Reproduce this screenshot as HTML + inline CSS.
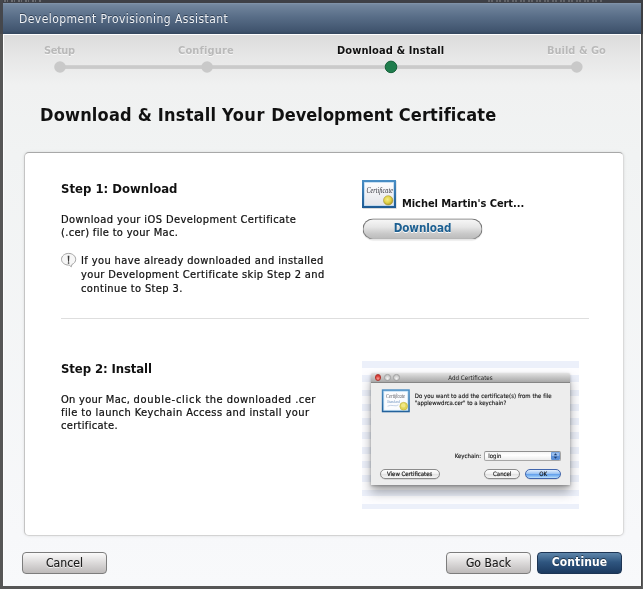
<!DOCTYPE html>
<html lang="en">
<head>
<meta charset="utf-8">
<title>Development Provisioning Assistant</title>
<style>
html,body{margin:0;padding:0;}
body{will-change:transform;width:643px;height:589px;overflow:hidden;background:#565656;position:relative;
  font-family:"DejaVu Sans Condensed","Liberation Sans","DejaVu Sans",sans-serif;color:#111;}
*{box-sizing:border-box;}
.abs{position:absolute;}
#dialog{position:absolute;left:3px;top:3px;width:638px;height:583px;background:#f4f5f6;overflow:hidden;}
#titlebar{position:absolute;left:0;top:0;width:638px;height:31px;
  background:linear-gradient(#8798ad 0px,#778ba2 1px,#6f839b 3px,#586d87 14px,#40546e 28px,#34475e 31px);}
#titlebar span{position:absolute;left:16px;top:9px;font-size:12px;line-height:15px;color:#eef1f5;letter-spacing:.45px;
  text-shadow:0 -1px 0 rgba(20,30,45,.6);white-space:nowrap;}
#body{position:absolute;left:0;top:31px;width:638px;height:552px;border-left:1px solid #fdfdfd;border-right:1px solid #fdfdfd;border-top:1px solid #fff;
  background:linear-gradient(#dcdcdc 0px,#e6e6e6 20px,#f0f1f1 50px,#f1f3f3 120px,#f7f8fa 500px,#f8f9fb 552px);}
.step{position:absolute;top:44px;font-size:11px;line-height:14px;font-weight:bold;color:#b9b9b9;white-space:nowrap;text-shadow:0 1px 0 rgba(255,255,255,.7);}
h1{position:absolute;margin:0;left:40px;top:104px;font-size:18px;line-height:22px;font-weight:bold;color:#111;white-space:nowrap;letter-spacing:.17px;}
#panel{position:absolute;left:24px;top:152px;width:600px;height:384px;background:#fff;border-radius:5px;
  border:1px solid #c4c4c4;border-top-color:#a8a8a8;border-right-color:#dadada;border-bottom-color:#d3d3d3;box-shadow:0 0 3px rgba(0,0,0,.11);}
.h2{position:absolute;left:61px;font-size:13px;line-height:16px;font-weight:bold;white-space:nowrap;letter-spacing:0;}
.p{position:absolute;font-size:11px;white-space:nowrap;letter-spacing:.32px;color:#0a0a0a;-webkit-text-stroke:.22px #1a1a1a;}
.btn{position:absolute;top:552px;height:22px;border:1px solid #7d7d7d;border-radius:4px;
  background:linear-gradient(#fbfbfb,#dedcdc 45%,#bdbaba);font-size:12px;line-height:20px;text-align:center;color:#1a1a1a;
  text-shadow:0 1px 0 rgba(255,255,255,.8);letter-spacing:.08px;-webkit-text-stroke:.15px #1a1a1a;}

#shot{position:absolute;left:362px;top:361px;width:217px;height:148px;overflow:hidden;
  background:repeating-linear-gradient(#ecf0fa 0px,#ecf0fa 6.800px,#fdfdff 6.800px,#fdfdff 14.300px);}
#win{position:absolute;left:9px;top:12px;width:199px;height:112px;background:#ededed;border-radius:2px 2px 0 0;
  box-shadow:0 7px 11px rgba(0,0,0,.34),0 1px 3px rgba(0,0,0,.28);}
#wtitle{position:absolute;left:0;top:0;width:199px;height:10px;background:linear-gradient(#e2e2e2,#c4c4c4 50%,#a8a8a8);border-bottom:1px solid #868686;border-radius:2px 2px 0 0;}
#wtitle i{position:absolute;top:1.200px;width:6.600px;height:6.600px;border-radius:50%;background:radial-gradient(circle at 50% 70%,#f0f0f0,#c8c8c8 70%);border:.6px solid #a2a2a2;}
#wtitle span{position:absolute;left:0;width:199px;top:1.300px;text-align:center;font-size:6.200px;line-height:8px;color:#1c1c1c;}
.wt{position:absolute;font-size:6px;line-height:7.100px;color:#0c0c0c;white-space:nowrap;-webkit-text-stroke:.12px #222;}
.wb{position:absolute;top:95.700px;height:10.600px;border:1px solid #8c8c8c;border-radius:5.500px;background:linear-gradient(#fff,#f1f1f1 48%,#e2e2e2 52%,#f7f7f7);font-size:6px;line-height:8.600px;text-align:center;color:#0c0c0c;white-space:nowrap;box-shadow:0 .5px .5px rgba(0,0,0,.2);-webkit-text-stroke:.15px #222;}
</style>
</head>
<body>
<div class="abs" style="left:0;top:0;width:643px;height:3px;background:#3e4046"></div>
<div class="abs" style="left:0;top:0;width:3px;height:34px;background:#45474c"></div>
<div class="abs" style="left:641px;top:0;width:2px;height:34px;background:#3c3e43"></div>
<div class="abs" style="left:641px;top:34px;width:1px;height:552px;background:#474747"></div>
<div class="abs" style="left:642px;top:34px;width:1px;height:555px;background:#5e5e5e"></div>
<div class="abs" style="left:4px;top:0;width:38px;height:2px;opacity:.28;background:repeating-linear-gradient(90deg,#ddd 0,#ddd 2px,transparent 2px,transparent 3px,#ddd 3px,#ddd 4px,transparent 4px,transparent 7px)"></div>
<div class="abs" style="left:488px;top:0;width:115px;height:2px;opacity:.25;background:repeating-linear-gradient(90deg,#ccc 0,#ccc 2px,transparent 2px,transparent 3px,#ccc 3px,#ccc 5px,transparent 5px,transparent 8px)"></div>
<div id="dialog">
  <div id="titlebar"><span>Development Provisioning Assistant</span></div>
  <div id="body"></div>
</div>

<!-- progress steps (page coordinates) -->
<svg class="abs" style="left:40px;top:55px" width="560" height="24" viewBox="0 0 560 24">
  <rect x="20" y="10.200" width="517" height="3.700" fill="#cacaca"/>
  <circle cx="20" cy="12" r="5.800" fill="#c9c9c9"/>
  <circle cx="167.100" cy="12" r="5.800" fill="#c9c9c9"/>
  <circle cx="536.800" cy="12" r="5.800" fill="#c9c9c9"/>
  <circle cx="351" cy="11.900" r="5.800" fill="#1f7d4d" stroke="#15613a" stroke-width="1"/>
</svg>
<div class="step" style="left:44px;letter-spacing:-.4px">Setup</div>
<div class="step" style="left:178px;letter-spacing:.15px">Configure</div>
<div class="step" style="left:337px;color:#111;text-shadow:0 1px 0 rgba(255,255,255,.8);letter-spacing:.1px">Download &amp; Install</div>
<div class="step" style="left:547px">Build &amp; Go</div>

<h1><span style="letter-spacing:.2px">Download &amp; Install </span><span style="letter-spacing:.55px">Your </span><span style="letter-spacing:.05px">Development </span><span style="letter-spacing:.14px">Certificate</span></h1>

<div id="panel"></div>

<!-- Step 1 -->
<div class="h2" style="top:181px">Step 1: Download</div>
<div class="p" style="left:61px;top:213px;line-height:13px;letter-spacing:.4px">Download your iOS Development Certificate<br><span style="letter-spacing:.32px">(.cer) file to your Mac.</span></div>
<svg class="abs" style="left:60px;top:252px" width="18" height="17" viewBox="0 0 18 17">
  <path d="M8.6 1.4c3.9 0 7.1 2.6 7.100 5.900c0 2.300-1.500 4.300-3.800 5.200l-.6 2.300-2.100-1.700c-.2 0-.4 0-.6 0c-3.900 0-7.100-2.600-7.100-5.800c0-3.300 3.200-5.900 7.100-5.900z" fill="#f6f6f6" stroke="#9a9a9a" stroke-width=".9"/>
  <path d="M7.700 3.700h1.700l-.35 6.000h-1.000z" fill="#3a3a3a"/>
  <rect x="7.800" y="10.300" width="1.500" height="1.500" rx=".5" fill="#3a3a3a"/>
</svg>
<div class="p" style="left:81px;top:254px;line-height:14px;letter-spacing:.39px">If you have already downloaded and installed<br>your Development Certificate skip Step 2 and<br>continue to Step 3.</div>

<div class="abs" style="left:61px;top:318px;width:528px;height:1px;background:#dedede"></div>

<!-- Step 2 -->
<div class="h2" style="top:361px;letter-spacing:-.1px">Step 2: Install</div>
<div class="p" style="left:61px;top:393px;line-height:13px"><span style="letter-spacing:.28px">On your Mac, </span><span style="letter-spacing:.72px">double-click </span><span style="letter-spacing:.46px">the downloaded .cer</span><br><span style="letter-spacing:.41px">file to launch Keychain Access and install your</span><br>certificate.</div>


<!-- Step 1 right column -->
<svg class="abs" style="left:361px;top:179px" width="37" height="31" viewBox="0 0 37 31">
  <defs>
    <linearGradient id="cf" x1="0" y1="0" x2="0" y2="1"><stop offset="0" stop-color="#4a8fc6"/><stop offset="1" stop-color="#1d5a93"/></linearGradient>
    <linearGradient id="ci" x1="0" y1="0" x2="0" y2="1"><stop offset="0" stop-color="#fdfdfe"/><stop offset="1" stop-color="#e4e5ea"/></linearGradient>
    <radialGradient id="gs" cx=".42" cy=".4" r=".62"><stop offset="0" stop-color="#f4ec86"/><stop offset=".55" stop-color="#e3d44a"/><stop offset="1" stop-color="#a99527"/></radialGradient>
  </defs>
  <rect x="1.600" y="2" width="34" height="28" fill="rgba(0,0,0,.15)"/>
  <rect x="1" y="1" width="34" height="28" fill="url(#cf)"/>
  <rect x="3" y="3" width="30" height="24" fill="#b4d4ee"/>
  <rect x="3.700" y="3.700" width="28.600" height="22.600" fill="url(#ci)"/>
  <text x="5.400" y="13.800" font-family="'Liberation Serif','DejaVu Serif',serif" font-style="italic" font-size="7.500" fill="#2e2e38" textLength="26.500" lengthAdjust="spacingAndGlyphs">Certificate</text>
  <circle cx="27.200" cy="21.400" r="4.700" fill="url(#gs)" stroke="#a08c24" stroke-width=".5"/>
</svg>
<div class="abs" style="left:402px;top:197px;font-size:11px;line-height:14px;font-weight:bold;white-space:nowrap;letter-spacing:-.06px">Michel Martin's Cert...</div>
<div class="abs" id="dl" style="left:362px;top:218px;width:120px;height:21px;transform:translate(.5px,.4px);border:1px solid #747474;border-bottom-color:#8a8a8a;border-radius:11px;background:linear-gradient(#f7f7f7,#e6e6e6 40%,#c9c9c9 75%,#bcbcbc);box-shadow:0 1px 1px rgba(0,0,0,.12);font-size:11.600px;line-height:19.400px;font-weight:bold;color:#1c5f91;text-align:center;letter-spacing:-.05px;text-shadow:0 1px 0 rgba(255,255,255,.9)">Download</div>

<!-- Step 2 mini screenshot -->
<div id="shot">
  <div id="win">
    <div id="wtitle"><i style="left:3.900px;background:radial-gradient(circle at 50% 72%,#f7a29a,#e0463f 55%,#c12b25);border-color:#b0362f"></i><i style="left:13.100px"></i><i style="left:22.300px"></i><span>Add Certificates</span></div>
    <svg class="abs" style="left:10px;top:16px" width="30" height="25" viewBox="0 0 30 25">
      <defs><linearGradient id="mf" x1="0" y1="0" x2="0" y2="1"><stop offset="0" stop-color="#4b8ec4"/><stop offset="1" stop-color="#22609a"/></linearGradient></defs>
      <rect x=".800" y=".300" width="28" height="23" fill="url(#mf)"/>
      <rect x="2.300" y="1.800" width="25" height="20" fill="#bcdcf3"/>
      <rect x="3.200" y="2.700" width="23.200" height="18.200" fill="#fbfcfe"/>
      <text x="5" y="8.600" font-family="'Liberation Serif',serif" font-style="italic" font-size="5.500" fill="#55555c" textLength="19" lengthAdjust="spacingAndGlyphs">Certificate</text>
      <text x="6" y="13.800" font-family="'Liberation Serif',serif" font-style="italic" font-size="4.600" fill="#6a8fbd" textLength="13" lengthAdjust="spacingAndGlyphs">Standard</text>
      <path d="M6.500 17.200q3-1.400 6-.6t5-.8" stroke="#8fa9cc" stroke-width=".5" fill="none"/>
      <circle cx="22.700" cy="17.200" r="3.900" fill="#e2d658" stroke="#b9aa3c" stroke-width=".5"/>
      <circle cx="22.300" cy="16.400" r="2.200" fill="#f3eb8e" opacity=".85"/>
    </svg>
    <div class="wt" style="left:43.700px;top:19.200px;line-height:7.100px"><span style="letter-spacing:.05px">Do you want to add the certificate(s) from the file</span><br>"applewwdrca.cer" to a keychain?</div>
    <div class="wt" style="left:50px;width:60px;text-align:right;top:78.800px;line-height:7.100px">Keychain:</div>
    <div class="abs" style="left:113px;top:78px;width:77px;height:10px;border:1px solid #a6a6a6;border-top-color:#8f8f8f;border-radius:2px;background:linear-gradient(#f4f4f4,#fff 40%,#ececec);"><span class="wt" style="left:3.200px;top:-.200px;line-height:7.100px">login</span><svg style="position:absolute;right:0;top:0" width="9" height="8" viewBox="0 0 9 8"><rect width="9" height="8" rx="1.200" fill="#5b8fd6"/><rect x=".6" y=".5" width="7.800" height="3.500" rx="1" fill="#a9c9f2" opacity=".8"/><path d="M4.500 1.200l1.700 2h-3.400zM4.500 6.800l1.700-2h-3.400z" fill="#1d3c6e"/></svg></div>
    <div class="wb" style="left:8.600px;width:60.200px">View Certificates</div>
    <div class="wb" style="left:113.400px;width:35.700px">Cancel</div>
    <div class="wb" style="left:154.100px;width:36px;border-color:#4166ad;background:linear-gradient(#e2eefc,#9cc4f3 45%,#5f9deb 52%,#8cc0f5 80%,#c2e3fb)">OK</div>
  </div>
</div>

<!-- buttons -->
<div class="btn" style="left:22px;width:85px">Cancel</div>
<div class="btn" style="left:446px;width:85px">Go Back</div>
<div class="btn" style="left:537px;width:85px;border-color:#1d3554;background:linear-gradient(#5f87ab,#2f5680 45%,#1c3a60);color:#fff;font-weight:bold;text-shadow:0 -1px 0 rgba(0,0,0,.5);letter-spacing:.1px;line-height:18px;-webkit-text-stroke:0">Continue</div>
</body>
</html>
